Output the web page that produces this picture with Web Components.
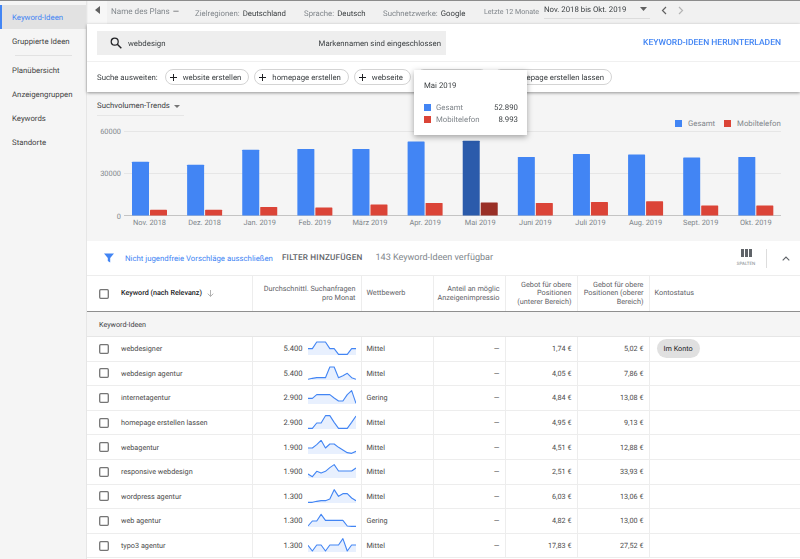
<!DOCTYPE html>
<html lang="de">
<head>
<meta charset="utf-8">
<title>Keyword-Ideen</title>
<style>
  html, body { margin: 0; height: 100%; overflow: hidden; }
  body { font-family: Roboto, "Liberation Sans", sans-serif; font-size: 7.8px; color: #3c4043; background: #fff; text-rendering: geometricPrecision; }
  app-shell { width: 800px; height: 559px; will-change: opacity; }
</style>
</head>
<body>
<app-shell>
  <side-nav slot="nav"></side-nav>
  <plan-bar slot="main"></plan-bar>
  <search-card slot="main"></search-card>
  <trend-chart slot="main"></trend-chart>
  <keyword-table slot="main"></keyword-table>
</app-shell>

<script>
const BLUE = '#4285f4';
const RED = '#db4437';

class AppShell extends HTMLElement {
    constructor() {
        super();
        this.attachShadow({ mode: 'open' });
        this.shadowRoot.innerHTML = `
            <style>
                :host { display: flex; overflow: hidden; position: relative; }
                .main { flex: 1; min-width: 0; display: flex; flex-direction: column; }
                .edge { position: absolute; left: 0; right: 0; top: 0; height: 1px; background: #8c8c8c; }
            </style>
            <slot name="nav"></slot>
            <div class="main"><slot name="main"></slot></div>
            <div class="edge"></div>
        `;
    }
}

class SideNav extends HTMLElement {
    constructor() {
        super();
        this.attachShadow({ mode: 'open' });
        this.shadowRoot.innerHTML = `
            <style>
                :host { display: block; width: 87px; flex: none; background: #f5f5f5; padding-top: 5px; box-sizing: border-box; font-size: 7.8px; color: #444; box-shadow: inset -1px 0 0 #e6e6e6; }
                .item { height: 24px; display: flex; align-items: center; padding-left: 12px; }
                .active { background: #e2e2e2; color: ${BLUE}; box-shadow: inset 2px 0 0 ${BLUE}; margin-right: 1px; }
                hr { border: 0; border-top: 1px solid #e2e2e2; margin: 2px 15px 2px 15px; }
            </style>
            <div class="item active">Keyword-Ideen</div>
            <div class="item">Gruppierte Ideen</div>
            <hr>
            <div class="item">Planübersicht</div>
            <div class="item">Anzeigengruppen</div>
            <div class="item">Keywords</div>
            <div class="item">Standorte</div>
        `;
    }
}

class PlanBar extends HTMLElement {
    constructor() {
        super();
        this.attachShadow({ mode: 'open' });
        this.shadowRoot.innerHTML = `
            <style>
                :host { display: flex; align-items: stretch; height: 24px; flex: none; background: #f1f1f1; font-size: 7.8px; color: #80868b; }
                .back { width: 19px; margin-left: 1px; background: #f7f7f7; display: flex; align-items: center; justify-content: center; padding-bottom: 4px; box-sizing: border-box; }
                .item { display: flex; align-items: center; white-space: nowrap; }
                b { font-weight: 400; color: #3c4043; margin-left: 3px; }
                .name { margin-left: 4px; padding-bottom: 2px; width: 84px; font-size: 8.1px; }
                .region { padding-top: 2px; width: 109px; }
                .lang { padding-top: 2px; width: 79px; }
                .net { padding-top: 2px; width: 101px; }
                .range { font-size: 7.1px; width: 60px; padding-bottom: 2px; }
                .pick { width: 106px; height: 19px; box-sizing: border-box; border-bottom: 1px solid #dcdcdc; display: flex; align-items: center; justify-content: space-between; color: #3c4043; padding-right: 3px; }
                .arrows { display: flex; align-items: center; gap: 11px; margin-left: 11px; padding-bottom: 3px; }
                svg { display: block; }
            </style>
            <div class="back"><svg width="6" height="8" viewBox="0 0 6 8"><path d="M5 0v8L0 4z" fill="#616161"/></svg></div>
            <div class="item name">Name des Plans <b>—</b></div>
            <div class="item region">Zielregionen: <b>Deutschland</b></div>
            <div class="item lang">Sprache: <b>Deutsch</b></div>
            <div class="item net">Suchnetzwerke: <b>Google</b></div>
            <div class="item range">Letzte 12 Monate</div>
            <div class="item pick">Nov. 2018 bis Okt. 2019
                <svg width="7" height="4" viewBox="0 0 7 4"><path d="M0 0h7L3.5 4z" fill="#616161"/></svg></div>
            <div class="arrows">
                <svg width="6" height="9" viewBox="0 0 6 9"><path d="M5 1L1.500 4.500 5 8" fill="none" stroke="#616161" stroke-width="1.200"/></svg>
                <svg width="6" height="9" viewBox="0 0 6 9"><path d="M1 1l3.500 3.500L1 8" fill="none" stroke="#b5b5b5" stroke-width="1.200"/></svg>
            </div>
        `;
    }
}

class ExpandChip extends HTMLElement {
    constructor() {
        super();
        this.attachShadow({ mode: 'open' });
        this.shadowRoot.innerHTML = `
            <style>
                :host { display: inline-flex; align-items: center; flex: none; height: 16px; box-sizing: border-box; border: 1px solid #d4d4d4; border-radius: 8px; padding: 0 7px 0 4px; font-size: 7.8px; color: #3c4043; background: #fff; white-space: nowrap; }
                svg { margin-right: 6px; display: block; flex: none; }
            </style>
            <svg width="7" height="7" viewBox="0 0 7 7"><path d="M3.500 0v7M0 3.500h7" stroke="#202124" stroke-width="1"/></svg>
            <slot></slot>
        `;
    }
}

class SearchCard extends HTMLElement {
    constructor() {
        super();
        this.attachShadow({ mode: 'open' });
        this.shadowRoot.innerHTML = `
            <style>
                :host { display: block; flex: none; height: 68px; background: #fff; box-shadow: 0 1px 3px rgba(0,0,0,.4); position: relative; z-index: 2; box-sizing: border-box; }
                .top { height: 38px; display: flex; align-items: center; justify-content: space-between; padding: 0 19px 0 10px; border-bottom: 1px solid #f0f0f0; box-sizing: border-box; }
                .box { width: 349px; flex: none; height: 24px; background: #eeeeee; display: flex; align-items: center; box-sizing: border-box; padding: 0 5px 0 13px; font-size: 7.8px; color: #3c4043; margin-top: 1px; }
                .box svg { margin-right: 6px; display: block; }
                .box .term { flex: 1; }
                .dl { color: ${BLUE}; font-size: 8.5px; font-weight: 500; white-space: nowrap; }
                .bottom { display: flex; align-items: center; gap: 5px; padding: 7px 0 0 10px; font-size: 7.8px; color: #3c4043; }
                .label { margin-right: 2px; }
            </style>
            <div class="top">
                <div class="box">
                    <svg width="12" height="12" viewBox="0 0 12 12"><circle cx="4.700" cy="4.700" r="3.500" fill="none" stroke="#202124" stroke-width="1.200"/><path d="M7.300 7.300L11.300 11.300" stroke="#202124" stroke-width="1.400"/></svg>
                    <span class="term">webdesign</span>
                    <span>Markennamen sind eingeschlossen</span>
                </div>
                <span class="dl">KEYWORD-IDEEN HERUNTERLADEN</span>
            </div>
            <div class="bottom">
                <span class="label">Suche ausweiten:</span>
                <expand-chip>website erstellen</expand-chip>
                <expand-chip>homepage erstellen</expand-chip>
                <expand-chip>webseite</expand-chip>
                <expand-chip style="width:72px"></expand-chip>
                <expand-chip>homepage erstellen lassen</expand-chip>
            </div>
        `;
    }
}

class TrendChart extends HTMLElement {
    constructor() {
        super();
        this.attachShadow({ mode: 'open' });
        const months = [
            ['Nov. 2018', 161.7, 209.7], ['Dez. 2018', 164.7, 209.7], ['Jan. 2019', 149.7, 207],
            ['Feb. 2019', 149, 207.5], ['März 2019', 149, 204.5], ['Apr. 2019', 141.5, 203],
            ['Mai 2019', 140.7, 202.5], ['Juni 2019', 157, 203], ['Juli 2019', 154, 202],
            ['Aug. 2019', 154.5, 201.3], ['Sept. 2019', 157.5, 205.5], ['Okt. 2019', 157, 205.5],
        ];
        // the svg starts at y=92 of the page, coordinates below are page y
        let bars = '';
        months.forEach(([label, blueTop, redTop], i) => {
            const x = 45 + i * 55.12;
            const hot = label === 'Mai 2019';
            bars += `<rect x="${x}" y="${blueTop - 92}" width="17" height="${215.5 - blueTop}" rx=".6" fill="${hot ? '#2b5bab' : BLUE}"/>`;
            bars += `<rect x="${x + 18}" y="${redTop - 92}" width="17" height="${215.5 - redTop}" rx=".6" fill="${hot ? '#992f26' : RED}"/>`;
            bars += `<text x="${x + 17.500}" y="133" text-anchor="middle">${label}</text>`;
        });
        this.shadowRoot.innerHTML = `
            <style>
                :host { display: block; flex: none; height: 149px; background: #f5f5f5; position: relative; }
                svg { display: block; position: absolute; left: 0; top: 0; }
                text { font-size: 7.4px; fill: #80868b; font-family: Roboto, "Liberation Sans", sans-serif; }
                .head { margin: 0 0 0 10px; padding-top: 6px; height: 17px; line-height: 16px; border-bottom: 1px solid #e6e6e6; font-size: 7.8px; color: #3c4043; position: relative; width: 87px; white-space: nowrap; }
                .head svg { left: 77px; top: 13px; }
                .legend { position: absolute; left: 588px; top: 27px; display: flex; align-items: center; font-size: 7.8px; color: #80868b; white-space: nowrap; }
                .legend i { width: 7px; height: 7px; margin-right: 6px; }
                .legend span { margin-right: 9px; }
                chart-tooltip { position: absolute; left: 327px; top: -22px; z-index: 3; }
            </style>
            <svg width="713" height="149" viewBox="0 0 713 149">
                <path d="M37 39.500H694M37 81.500H694" stroke="#e6e6e6"/>
                <path d="M37 123.500H694" stroke="#c4c4c4" stroke-width="1"/>
                <g text-anchor="end"><text x="34" y="42">60000</text><text x="34" y="84">30000</text><text x="34" y="126.500">0</text></g>
                ${bars}
            </svg>
            <div class="head">Suchvolumen-Trends<svg width="6" height="3" viewBox="0 0 6 3"><path d="M0 0h6L3 3z" fill="#757575"/></svg></div>
            <div class="legend"><i style="background:${BLUE}"></i><span>Gesamt</span><i style="background:${RED}"></i>Mobiltelefon</div>
            <chart-tooltip></chart-tooltip>
        `;
    }
}

class ChartTooltip extends HTMLElement {
    constructor() {
        super();
        this.attachShadow({ mode: 'open' });
        this.shadowRoot.innerHTML = `
            <style>
                :host { display: block; width: 113px; height: 65px; box-sizing: border-box; background: #fff; box-shadow: 0 2px 6px rgba(0,0,0,.35); padding: 11px 9px 0 10px; font-size: 7.8px; color: #3c4043; }
                .title { margin-bottom: 11px; }
                .row { display: flex; align-items: center; height: 12px; color: #80868b; }
                i { width: 7px; height: 7px; margin-right: 5px; }
                span { flex: 1; }
                b { font-weight: 400; color: #3c4043; }
            </style>
            <div class="title">Mai 2019</div>
            <div class="row"><i style="background:${BLUE}"></i><span>Gesamt</span><b>52.890</b></div>
            <div class="row"><i style="background:${RED}"></i><span>Mobiltelefon</span><b>8.993</b></div>
        `;
    }
}

class TrendSpark extends HTMLElement {
    constructor() {
        super();
        this.attachShadow({ mode: 'open' });
    }
    connectedCallback() {
        const pts = this.getAttribute('points').split(',').map((v, i) => `${(i * 13.09).toFixed(1)},${v}`);
        this.shadowRoot.innerHTML = `
            <style>
                :host { display: block; width: 48px; height: 15px; flex: none; }
                svg { display: block; }
            </style>
            <svg width="48" height="15" viewBox="0 0 144 45" preserveAspectRatio="none">
                <polygon points="0,42 ${pts.join(' ')} 144,42" fill="#e8f0fe"/>
                <polyline points="${pts.join(' ')}" fill="none" stroke="${BLUE}" stroke-width="3.300" stroke-linejoin="round"/>
            </svg>
        `;
    }
}

class CheckBox extends HTMLElement {
    constructor() {
        super();
        this.attachShadow({ mode: 'open' });
        this.shadowRoot.innerHTML = `
            <style>
                :host { display: block; width: 10px; height: 10px; flex: none; }
                svg { display: block; }
            </style>
            <svg width="10" height="10" viewBox="0 0 10 10"><rect x=".7" y=".7" width="8.6" height="8.6" rx="1" fill="none" stroke="#757575" stroke-width="1.300"/></svg>
        `;
    }
}

const COLS = '165.500px 109px 72px 72px 72px 72px 1fr';

class KeywordRow extends HTMLElement {
    connectedCallback() {
        this.attachShadow({ mode: 'open' });
        const a = n => this.getAttribute(n) || '';
        this.shadowRoot.innerHTML = `
            <style>
                :host { display: grid; grid-template-columns: ${COLS}; height: 24.600px; box-sizing: border-box; border-bottom: 1px solid #ededed; font-size: 7.25px; color: #4a4a4a; }
                .c { display: flex; align-items: center; border-right: 1px solid #ededed; padding: 0 5px; box-sizing: border-box; white-space: nowrap; }
                .kw { padding-left: 12px; }
                .kw span { margin-left: 12px; }
                .vol { justify-content: flex-end; padding-right: 5px; }
                .vol span { margin-right: 5px; font-size: 7.6px; }
                .num { justify-content: flex-end; }
                .last { border-right: 0; }
                .pill { background: #e0e0e0; border-radius: 10px; height: 19px; line-height: 19px; padding: 0 7px; margin-left: 2px; color: #202124; }
            </style>
            <div class="c kw"><check-box></check-box><span>${a('kw')}</span></div>
            <div class="c vol"><span>${a('vol')}</span><trend-spark points="${a('spark')}"></trend-spark></div>
            <div class="c">${a('comp')}</div>
            <div class="c num">—</div>
            <div class="c num">${a('low')}</div>
            <div class="c num">${a('high')}</div>
            <div class="c last">${a('status') ? `<span class="pill">${a('status')}</span>` : ''}</div>
        `;
    }
}

class KeywordTable extends HTMLElement {
    constructor() {
        super();
        this.attachShadow({ mode: 'open' });
        const rows = [
            ['webdesigner', '5.400', '23,23,3,3,3,23,23,40,40,40,23,23', 'Mittel', '1,74 €', '5,02 €', 'Im Konto'],
            ['webdesign agentur', '5.400', '40,37,35,35,35,3,3,35,29,22,35,40', 'Mittel', '4,05 €', '7,86 €', ''],
            ['internetagentur', '2.900', '25,25,14,14,14,14,24,33,33,14,2,40', 'Gering', '4,84 €', '13,08 €', ''],
            ['homepage erstellen lassen', '2.900', '40,40,24,24,2,2,22,40,40,40,22,3', 'Mittel', '4,95 €', '9,13 €', ''],
            ['webagentur', '1.900', '24,24,14,1,24,12,12,22,30,38,40,34', 'Mittel', '4,51 €', '12,88 €', ''],
            ['responsive webdesign', '1.900', '30,38,22,27,22,11,2,21,21,21,21,12', 'Mittel', '2,51 €', '33,93 €', ''],
            ['wordpress agentur', '1.300', '40,40,37,35,35,30,2,22,14,14,27,35', 'Mittel', '6,03 €', '13,06 €', ''],
            ['web agentur', '1.300', '39,24,24,4,22,22,22,22,22,39,40,40', 'Gering', '4,82 €', '13,00 €', ''],
            ['typo3 agentur', '1.300', '22,39,21,21,39,21,21,21,2,39,21,21', 'Mittel', '17,83 €', '27,52 €', ''],
        ];
        const rowHtml = rows.map(([kw, vol, spark, comp, low, high, status]) =>
            `<keyword-row kw="${kw}" vol="${vol}" spark="${spark}" comp="${comp}" low="${low}" high="${high}" status="${status}"></keyword-row>`).join('');
        this.shadowRoot.innerHTML = `
            <style>
                :host { display: block; flex: 1; min-height: 0; background: #fff; overflow: hidden; font-size: 7.8px; color: #80868b; }
                .tools { height: 35px; display: flex; align-items: center; border-bottom: 1px solid #ededed; box-sizing: border-box; padding-left: 17px; white-space: nowrap; }
                .tools svg { display: block; }
                .link { color: ${BLUE}; margin-left: 11px; }
                .add { color: #5f6368; font-weight: 500; font-size: 8.2px; letter-spacing: .2px; margin-left: 9px; }
                .count { margin-left: 13px; font-size: 9.05px; }
                .cols { margin-left: auto; width: 40px; display: flex; flex-direction: column; align-items: center; font-size: 4.500px; }
                .cols span { margin-top: 5px; }
                .sep { width: 1px; height: 19px; background: #ddd; margin: 0 15px 0 0; }
                .head { display: grid; grid-template-columns: ${COLS}; height: 36px; border-bottom: 1px solid #8f8f8f; box-sizing: border-box; font-size: 7.3px; color: #5f6368; line-height: 8.500px; }
                .head > div { display: flex; align-items: center; border-right: 1px solid #ededed; box-sizing: border-box; padding: 0 5px; white-space: nowrap; }
                .r { justify-content: flex-end; text-align: right; }
                .first { padding-left: 12px !important; color: #202124; font-weight: 500; font-size: 7.2px; }
                .first span { margin-left: 12px; }
                .first svg { margin-left: 5px; display: block; }
                .head > .end { border-right: 0; }
                .group { height: 25px; background: #f5f5f5; border-bottom: 1px solid #e6e6e6; box-sizing: border-box; padding-left: 12px; display: flex; align-items: center; color: #3c4043; font-size: 7.2px; }
            </style>
            <div class="tools">
                <svg width="10" height="10" viewBox="0 0 10 10"><path d="M0 .500h10L6.200 5v4.500L3.800 8V5z" fill="${BLUE}"/></svg>
                <span class="link">Nicht jugendfreie Vorschläge ausschließen</span>
                <span class="add">FILTER HINZUFÜGEN</span>
                <span class="count">143 Keyword-Ideen verfügbar</span>
                <div class="cols">
                    <svg width="11" height="8" viewBox="0 0 11 8"><path d="M0 0h3v8H0zM4 0h3v8H4zM8 0h3v8H8z" fill="#5f6368"/></svg>
                    <span>SPALTEN</span>
                </div>
                <div class="sep"></div>
                <svg width="8" height="5" viewBox="0 0 8 5" style="margin-right:10px"><path d="M.700 4.300L4 1l3.300 3.300" fill="none" stroke="#5f6368" stroke-width="1.100"/></svg>
            </div>
            <div class="head">
                <div class="first"><check-box></check-box><span>Keyword (nach Relevanz)</span>
                    <svg width="7" height="7" viewBox="0 0 7 7"><path d="M3.500 0v6.300M.700 3.700l2.800 2.700 2.800-2.700" fill="none" stroke="#9e9e9e" stroke-width=".8"/></svg></div>
                <div class="r"><span>Durchschnittl. Suchanfragen<br>pro Monat</span></div>
                <div>Wettbewerb</div>
                <div class="r"><span>Anteil an möglic<br>Anzeigenimpressio</span></div>
                <div class="r"><span>Gebot für obere<br>Positionen<br>(unterer Bereich)</span></div>
                <div class="r"><span>Gebot für obere<br>Positionen (oberer<br>Bereich)</span></div>
                <div class="end">Kontostatus</div>
            </div>
            <div class="group">Keyword-Ideen</div>
            ${rowHtml}
        `;
    }
}

customElements.define('app-shell', AppShell);
customElements.define('side-nav', SideNav);
customElements.define('plan-bar', PlanBar);
customElements.define('expand-chip', ExpandChip);
customElements.define('search-card', SearchCard);
customElements.define('chart-tooltip', ChartTooltip);
customElements.define('trend-chart', TrendChart);
customElements.define('trend-spark', TrendSpark);
customElements.define('check-box', CheckBox);
customElements.define('keyword-row', KeywordRow);
customElements.define('keyword-table', KeywordTable);
</script>
</body>
</html>
